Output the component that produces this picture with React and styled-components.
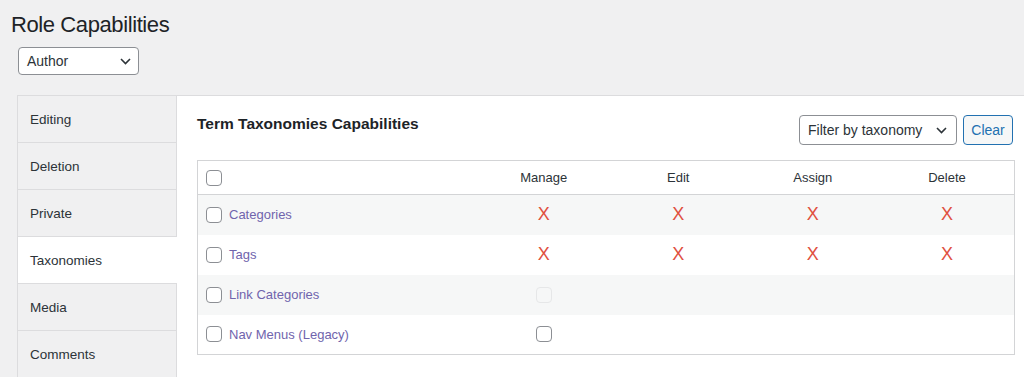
import React from "react";
import styled, { createGlobalStyle } from "styled-components";

const GlobalStyle = createGlobalStyle`
  html, body { margin: 0; padding: 0; }
  body {
    background: #f0f0f1;
    font-family: "Liberation Sans", Arial, sans-serif;
    color: #1d2327;
    overflow: hidden;
  }
  * { box-sizing: border-box; }
`;

const Page = styled.div`
  padding: 11px 0 0 11px;
`;

const Title = styled.h1`
  margin: 0;
  font-size: 22px;
  line-height: 28px;
  font-weight: 400;
  letter-spacing: -0.4px;
  color: #1d2327;
`;

const SelectBox = styled.div`
  display: flex;
  align-items: center;
  justify-content: space-between;
  width: ${(p) => p.$width}px;
  height: ${(p) => p.$height}px;
  margin-top: ${(p) => p.$mt || 0}px;
  margin-left: ${(p) => p.$ml || 0}px;
  padding: 0 ${(p) => p.$pr || 7}px 0 8px;
  background: #fff;
  border: 1px solid #8c8f94;
  border-radius: 4px;
  font-size: 14px;
  color: #2c3338;
`;

const Tabs = styled.div`
  display: flex;
  margin: 20px 0 0 6px;
  border-top: 1px solid #dcdcde;
`;

const TabList = styled.div`
  display: flex;
  flex-direction: column;
  width: 160px;
  flex: 0 0 160px;
  border-left: 1px solid #dcdcde;
  border-right: 1px solid #dcdcde;
`;

const Tab = styled.div`
  display: flex;
  align-items: center;
  height: 47px;
  flex: 0 0 47px;
  padding-left: 12px;
  border-bottom: 1px solid #dcdcde;
  font-size: 13.5px;
  color: #2c3338;
  background: ${(p) => (p.$active ? "#fff" : "#f0f0f1")};
  margin-right: ${(p) => (p.$active ? "-1px" : "0")};
`;

const Panel = styled.div`
  flex: 1;
  background: #fff;
  padding: 19px 9px 0 20px;
`;

const PanelHeader = styled.div`
  display: flex;
  justify-content: space-between;
  align-items: flex-start;
`;

const Heading = styled.h2`
  margin: 0;
  font-size: 15.5px;
  line-height: 18px;
  font-weight: 700;
  color: #1d2327;
`;

const Controls = styled.div`
  display: flex;
  gap: 6px;
  margin-right: 2px;
`;

const ClearButton = styled.button`
  width: 50px;
  height: 30px;
  padding: 0;
  border: 1px solid #2271b1;
  border-radius: 4px;
  background: #f6f7f7;
  color: #2271b1;
  font-family: inherit;
  font-size: 14px;
`;

const Table = styled.table`
  width: 100%;
  margin-top: 15px;
  border-collapse: collapse;
  table-layout: fixed;
  border: 1px solid #d3d4d6;
`;

const HeadCell = styled.th`
  height: 34px;
  padding: 0;
  padding-left: ${(p) => (p.$first ? "8px" : "0")};
  width: ${(p) => (p.$first ? "279px" : "auto")};
  text-align: ${(p) => (p.$first ? "left" : "center")};
  font-size: 13px;
  font-weight: 400;
  color: #2c3338;
  border-bottom: 1px solid #d3d4d6;
  vertical-align: middle;
`;

const Row = styled.tr`
  background: ${(p) => (p.$striped ? "#f6f7f7" : "#fff")};
`;

const Cell = styled.td`
  height: 40px;
  padding: 0;
  padding-left: ${(p) => (p.$first ? "8px" : "0")};
  text-align: ${(p) => (p.$first ? "left" : "center")};
  vertical-align: middle;
`;

const NameWrap = styled.div`
  display: flex;
  align-items: center;
  gap: 7px;
`;

const Check = styled.input.attrs({ type: "checkbox" })`
  appearance: none;
  -webkit-appearance: none;
  display: block;
  margin: ${(p) => (p.$center ? "0 auto" : "0")};
  width: 16px;
  height: 16px;
  border: 1px solid ${(p) => (p.disabled ? "#e6e7e8" : "#8c8f94")};
  border-radius: 4px;
  background: ${(p) => (p.disabled ? "#f6f7f7" : "#fff")};
`;

const TermLink = styled.a`
  color: #7064ad;
  font-size: 13px;
  text-decoration: none;
`;

const Denied = styled.span`
  display: inline-block;
  font-size: 18px;
  line-height: 18px;
  color: #e0503f;
`;

const Chevron = () => (
  <svg width="11" height="7" viewBox="0 0 11 7" aria-hidden="true">
    <path d="M1 1l4.5 4.5L10 1" fill="none" stroke="#2c3338" strokeWidth="1.6" />
  </svg>
);

const tabs = ["Editing", "Deletion", "Private", "Taxonomies", "Media", "Comments"];
const columns = ["Manage", "Edit", "Assign", "Delete"];
const terms = [
  { name: "Categories", caps: ["x", "x", "x", "x"] },
  { name: "Tags", caps: ["x", "x", "x", "x"] },
  { name: "Link Categories", caps: ["disabled", null, null, null] },
  { name: "Nav Menus (Legacy)", caps: ["check", null, null, null] },
];

function CapCell({ value }) {
  if (value === "x") return <Denied>X</Denied>;
  if (value === "disabled") return <Check $center disabled />;
  if (value === "check") return <Check $center />;
  return null;
}

export default function App() {
  return (
    <>
      <GlobalStyle />
      <Page>
        <Title>Role Capabilities</Title>
        <SelectBox $width={121} $height={28} $mt={8} $ml={7}>
          <span>Author</span>
          <Chevron />
        </SelectBox>
        <Tabs>
          <TabList>
            {tabs.map((t) => (
              <Tab key={t} $active={t === "Taxonomies"}>
                {t}
              </Tab>
            ))}
          </TabList>
          <Panel>
            <PanelHeader>
              <Heading>Term Taxonomies Capabilities</Heading>
              <Controls>
                <SelectBox $width={158} $height={30} $pr={9}>
                  <span>Filter by taxonomy</span>
                  <Chevron />
                </SelectBox>
                <ClearButton>Clear</ClearButton>
              </Controls>
            </PanelHeader>
            <Table>
              <thead>
                <tr>
                  <HeadCell $first>
                    <Check />
                  </HeadCell>
                  {columns.map((c) => (
                    <HeadCell key={c}>{c}</HeadCell>
                  ))}
                </tr>
              </thead>
              <tbody>
                {terms.map((t, i) => (
                  <Row key={t.name} $striped={i % 2 === 0}>
                    <Cell $first>
                      <NameWrap>
                        <Check />
                        <TermLink href="#">{t.name}</TermLink>
                      </NameWrap>
                    </Cell>
                    {t.caps.map((v, j) => (
                      <Cell key={j}>
                        <CapCell value={v} />
                      </Cell>
                    ))}
                  </Row>
                ))}
              </tbody>
            </Table>
          </Panel>
        </Tabs>
      </Page>
    </>
  );
}
